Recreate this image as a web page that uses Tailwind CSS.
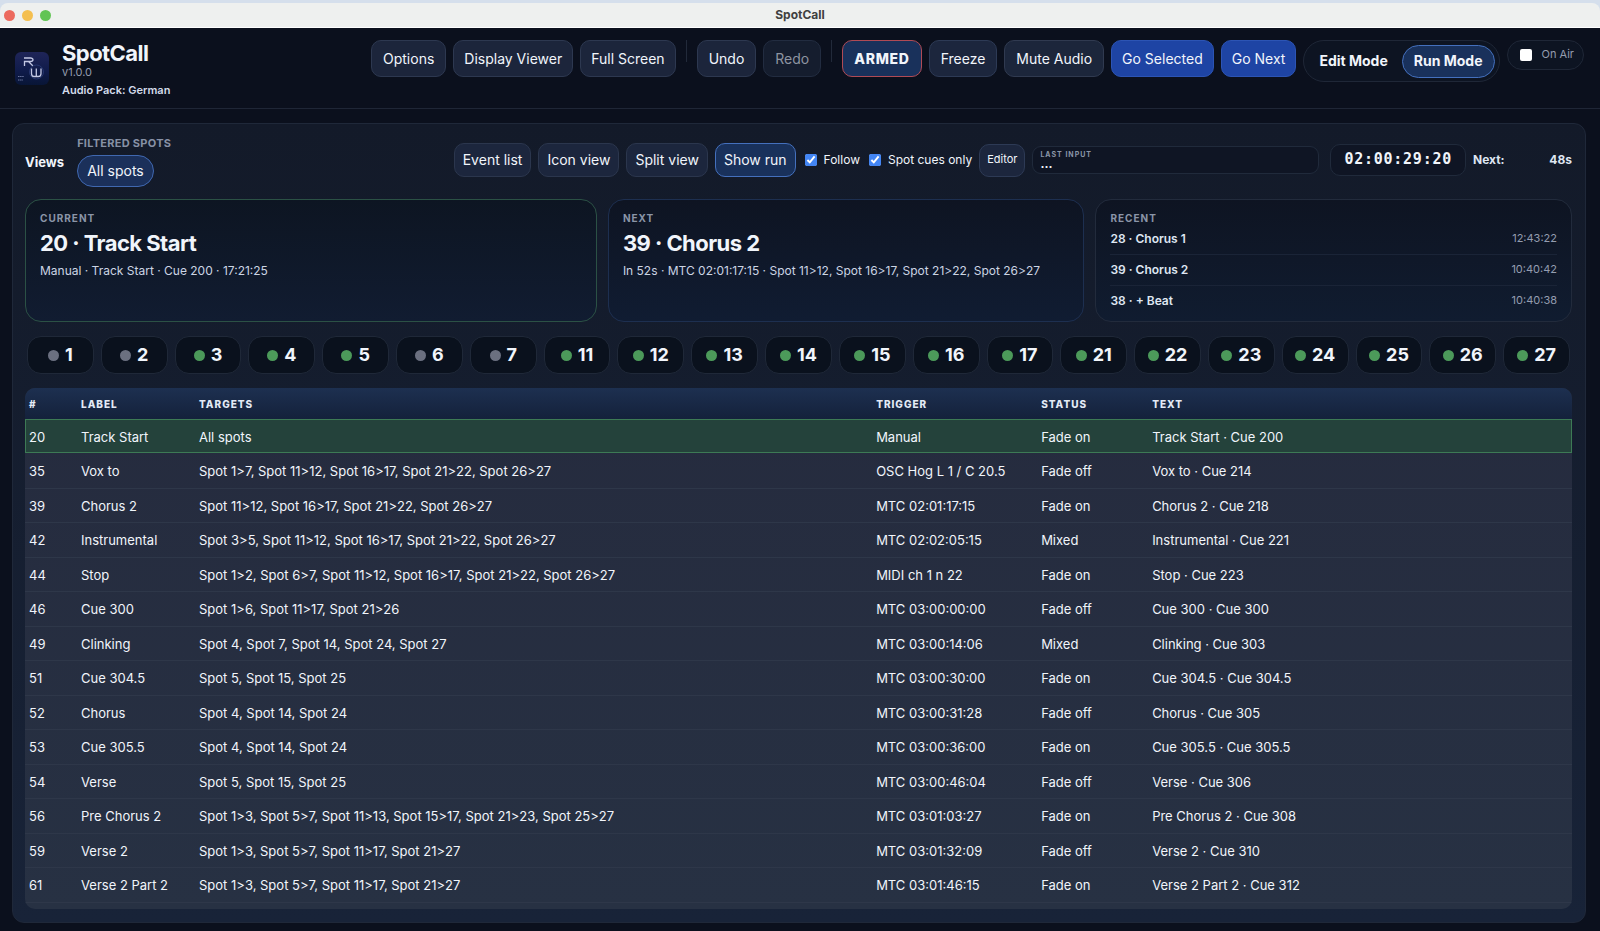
<!DOCTYPE html>
<html lang="en">
<head>
    <meta charset="UTF-8">
    <meta name="viewport" content="width=device-width, initial-scale=1.0">
    <title>SpotCall</title>
    <script src="https://cdn.jsdelivr.net/npm/@tailwindcss/browser@4"></script>
</head>
<body class="bg-[#d5dfec] font-['Inter',sans-serif] text-sm text-[#f1f5fb]">

<div class="flex flex-col min-h-screen pt-[3px]">
    <!-- Window title bar -->
    <div class="relative flex items-center h-[25px] px-1 gap-[7px] bg-[#eef0ef] rounded-t-lg border-b border-white">
        <span class="size-[11px] rounded-full bg-[#ec6a5e]"></span>
        <span class="size-[11px] rounded-full bg-[#f4bf4f]"></span>
        <span class="size-[11px] rounded-full bg-[#61c454]"></span>
        <div class="absolute inset-x-0 text-center text-[12px] font-bold text-[#3f4040]">SpotCall</div>
    </div>

    <div class="flex-1 flex flex-col bg-[#0b101d]">
        <header class="flex items-start justify-between h-[81px] pt-3 pl-[15px] pr-4 border-b border-[#1f2636]">
            <div class="flex items-center gap-[13px]">
                <svg class="size-[34px]" viewBox="0 0 34 34" fill="none">
                    <defs>
                        <linearGradient id="logoBg" x1="0" y1="0" x2="0" y2="1">
                            <stop offset="0" stop-color="#1f2558"/>
                            <stop offset="0.6" stop-color="#0f1b4a"/>
                            <stop offset="1" stop-color="#081536"/>
                        </linearGradient>
                    </defs>
                    <rect width="34" height="33" rx="6" fill="url(#logoBg)"/>
                    <path d="M9.500 14V9.500H15.500Q18 9.500 18 7.700Q18 6 15.500 6H9M13.500 9.500L18 14" stroke="#c3c8e4" stroke-width="1.300"/>
                    <circle cx="21.500" cy="20" r="7" stroke="#26366f" stroke-width="1"/>
                    <path d="M16.500 16.500V21.500Q16.500 24.500 19 24.500H23.500Q26 24.500 26 21.500V16.500M21.300 16.500V24" stroke="#c3c8e4" stroke-width="1.300"/>
                    <path d="M3 24.500H9M3 28H8" stroke="#6c769f" stroke-width="1.200" stroke-dasharray="1.500 0.600"/>
                </svg>
                <div>
                    <h1 class="text-[22px] leading-[26px] font-bold tracking-tight">SpotCall</h1>
                    <div class="text-[11px] leading-[12px] text-[#949cae]">v1.0.0</div>
                    <div class="mt-[5px] text-[11px] leading-[14px] font-semibold text-[#d3dbea]">Audio Pack: German</div>
                </div>
            </div>

            <div class="flex items-start gap-[7px] whitespace-nowrap">
                <button class="h-[37px] px-[11px] rounded-[10px] border border-[#2d3850] bg-[#1c253b]">Options</button>
                <button class="h-[37px] px-[10px] rounded-[10px] border border-[#2d3850] bg-[#1c253b]">Display Viewer</button>
                <button class="h-[37px] px-[10px] rounded-[10px] border border-[#2d3850] bg-[#1c253b]">Full Screen</button>
                <span class="w-px h-[22px] mx-[3px] bg-[#222a3a]"></span>
                <button class="h-[37px] px-[11px] rounded-[10px] border border-[#2d3850] bg-[#1c253b]">Undo</button>
                <button class="h-[37px] px-[11px] rounded-[10px] border border-[#222c40] bg-[#151d2e] text-[#8e94a1]" disabled>Redo</button>
                <span class="w-px h-[22px] mx-[3px] bg-[#222a3a]"></span>
                <button class="h-[37px] px-[11px] rounded-[10px] border border-[#b04a55] bg-[#19315b] font-extrabold tracking-wider">ARMED</button>
                <button class="h-[37px] px-[11px] rounded-[10px] border border-[#2d3a55] bg-[#1c263d]">Freeze</button>
                <button class="h-[37px] px-[11px] rounded-[10px] border border-[#303a50] bg-[#1c263b]">Mute Audio</button>
                <button class="h-[37px] px-[10px] rounded-[10px] border border-[#2c54b4] bg-[#1e44a4]">Go Selected</button>
                <button class="h-[37px] px-[10px] rounded-[10px] border border-[#2c54b4] bg-[#1e44a4]">Go Next</button>
                <div class="flex items-center gap-[3px] h-[42px] p-1 rounded-full border border-[#1f2737] bg-[#0d1422] font-bold">
                    <button class="h-[33px] px-[11px] rounded-full">Edit Mode</button>
                    <button class="h-[33px] px-[11px] rounded-full border border-[#4470bd] bg-[#19315b]">Run Mode</button>
                </div>
                <label class="flex items-center gap-[10px] h-[30px] pl-[12px] pr-[9px] rounded-full border border-[#1f2737] bg-[#0d1422] text-[11px] text-[#949cae]">
                    <input type="checkbox" class="appearance-none size-[12px] rounded-[2px] bg-white">
                    On Air
                </label>
            </div>
        </header>

        <main class="flex-1 flex flex-col mt-[14px] ml-3 mr-[14px] mb-2 pl-3 pr-[13px] pt-3 pb-[13px] rounded-xl border border-[#1f2839] bg-linear-to-b from-[#131a29] to-[#182338]">
            <div class="flex items-center justify-between h-[50px] whitespace-nowrap">
                <div class="flex items-center gap-[13px]">
                    <span class="mt-[2px] font-bold text-[13px]">Views</span>
                    <div>
                        <div class="text-[11px] leading-[14px] font-bold tracking-wide text-[#8791a5]">FILTERED SPOTS</div>
                        <button class="h-[32px] mt-[5px] px-[9px] rounded-full border border-[#4068b0] bg-[#1b305a]">All spots</button>
                    </div>
                </div>
                <div class="flex items-center gap-[7px] mt-[-2px] text-[12px]">
                    <button class="h-[34px] px-[8px] rounded-[10px] border border-[#2b364d] bg-[#1c263d] text-sm">Event list</button>
                    <button class="h-[34px] px-[8px] rounded-[10px] border border-[#2b364d] bg-[#1c263d] text-sm">Icon view</button>
                    <button class="h-[34px] px-[8px] rounded-[10px] border border-[#2b364d] bg-[#1c263d] text-sm">Split view</button>
                    <button class="h-[34px] px-[8px] rounded-[10px] border border-[#4470bd] bg-[#19315b] text-sm">Show run</button>
                    <label class="flex items-center gap-[7px] pl-[2px]">
                        <input type="checkbox" class="size-[12px] accent-[#4285f4]" checked>
                        Follow
                    </label>
                    <label class="flex items-center gap-[7px] pl-[2px]">
                        <input type="checkbox" class="size-[12px] accent-[#4285f4]" checked>
                        Spot cues only
                    </label>
                    <button class="h-[33px] px-[7px] rounded-[10px] border border-[#2d3a55] bg-[#1c263d] text-[11px]">Editor</button>
                    <div class="w-[287px] h-[28px] px-[7px] rounded-[9px] border border-[#202a3b] bg-[#0f1524]">
                        <div class="pt-[3px] text-[7px] leading-[9px] font-bold tracking-[1px] text-[#8b95a8]">LAST INPUT</div>
                        <div class="text-[12px] leading-[9px] font-bold">...</div>
                    </div>
                    <div class="flex items-center h-[32px] ml-1 px-[13px] rounded-[10px] border border-[#202a3b] bg-[#0f1524] font-['DejaVu_Sans_Mono',monospace] text-[15px] font-bold tracking-wider">02:00:29:20</div>
                    <div class="flex justify-between w-[99px] font-bold text-[#dfe6f2]"><span>Next:</span><span>48s</span></div>
                </div>
            </div>

            <section class="grid grid-cols-[1.2fr_1fr_1fr] gap-[11px] mt-[13px] h-[123px]">
                <div class="px-[14px] pt-[12px] rounded-2xl border border-[#2b5145] bg-linear-to-b from-[#0d1522] to-[#111c31]">
                    <h2 class="text-[10px] leading-[12px] font-bold tracking-widest text-[#8b95a8]">CURRENT</h2>
                    <div class="mt-[5px] text-[22px] leading-[28px] font-bold tracking-tight">20 · Track Start</div>
                    <div class="mt-[6px] text-[12px] leading-[16px] text-[#ccd5e4]">Manual · Track Start · Cue 200 · 17:21:25</div>
                </div>
                <div class="px-[14px] pt-[12px] rounded-2xl border border-[#1d2f50] bg-linear-to-b from-[#0e1422] to-[#101c32]">
                    <h2 class="text-[10px] leading-[12px] font-bold tracking-widest text-[#8b95a8]">NEXT</h2>
                    <div class="mt-[5px] text-[22px] leading-[28px] font-bold tracking-tight">39 · Chorus 2</div>
                    <div class="mt-[6px] text-[12px] leading-[16px] text-[#ccd5e4]">In 52s · MTC 02:01:17:15 · Spot 11&gt;12, Spot 16&gt;17, Spot 21&gt;22, Spot 26&gt;27</div>
                </div>
                <div class="px-[14px] pt-[12px] rounded-2xl border border-[#222b3c] bg-linear-to-b from-[#0e1422] to-[#101c30]">
                    <h2 class="text-[10px] leading-[12px] font-bold tracking-widest text-[#8b95a8]">RECENT</h2>
                    <ul class="text-[12px] divide-y divide-[#1a2437]">
                        <li class="flex justify-between h-[31px] pt-[6px]"><span class="font-semibold leading-[18px] text-[#dfe6f2]">28 · Chorus 1</span><span class="text-[11px] leading-[16px] text-[#949db0]">12:43:22</span></li>
                        <li class="flex justify-between h-[31px] pt-[6px]"><span class="font-semibold leading-[18px] text-[#dfe6f2]">39 · Chorus 2</span><span class="text-[11px] leading-[16px] text-[#949db0]">10:40:42</span></li>
                        <li class="flex justify-between h-[31px] pt-[6px]"><span class="font-semibold leading-[18px] text-[#dfe6f2]">38 · + Beat</span><span class="text-[11px] leading-[16px] text-[#949db0]">10:40:38</span></li>
                    </ul>
                </div>
            </section>

            <div id="spots" class="grid grid-cols-[repeat(21,minmax(0,1fr))] gap-[7px] mt-[14px] px-[2px]"></div>

            <div class="flex-1 mt-[14px] rounded-[10px] overflow-hidden bg-linear-to-b from-[#252b3e] to-[#273143]">
                <table class="w-full table-fixed text-left">
                    <thead>
                        <tr class="h-[31px] bg-linear-to-b from-[#1d3050] to-[#14213b] text-[10px] tracking-widest text-[#e3eaf6]">
                            <th class="w-[52px] pl-1 pt-[2px] font-extrabold">#</th>
                            <th class="w-[118px] pl-1 pt-[2px] font-extrabold">LABEL</th>
                            <th class="pl-1 pt-[2px] font-extrabold">TARGETS</th>
                            <th class="w-[165px] pl-1 pt-[2px] font-extrabold">TRIGGER</th>
                            <th class="w-[111px] pl-1 pt-[2px] font-extrabold">STATUS</th>
                            <th class="w-[27.4%] pl-1 pt-[2px] font-extrabold">TEXT</th>
                        </tr>
                    </thead>
                    <tbody id="cues" class="text-[13px]"></tbody>
                </table>
            </div>
        </main>
    </div>
</div>

<script>
    const spots = [1, 2, 3, 4, 5, 6, 7, 11, 12, 13, 14, 15, 16, 17, 21, 22, 23, 24, 25, 26, 27];
    const offSpots = [1, 2, 6, 7];

    document.getElementById('spots').innerHTML = spots.map(n => `
        <button class="flex items-center justify-center gap-[6px] h-[38px] rounded-[14px] border border-[#1f2838] bg-[#0a111d] text-lg font-bold">
            <span class="size-[11px] rounded-full ${offSpots.includes(n) ? 'bg-[#6b7080]' : 'bg-[#4c9a5a]'}"></span>${n}
        </button>`).join('');

    const cues = [
        ['20', 'Track Start', 'All spots', 'Manual', 'Fade on', 'Track Start · Cue 200'],
        ['35', 'Vox to', 'Spot 1>7, Spot 11>12, Spot 16>17, Spot 21>22, Spot 26>27', 'OSC Hog L 1 / C 20.5', 'Fade off', 'Vox to · Cue 214'],
        ['39', 'Chorus 2', 'Spot 11>12, Spot 16>17, Spot 21>22, Spot 26>27', 'MTC 02:01:17:15', 'Fade on', 'Chorus 2 · Cue 218'],
        ['42', 'Instrumental', 'Spot 3>5, Spot 11>12, Spot 16>17, Spot 21>22, Spot 26>27', 'MTC 02:02:05:15', 'Mixed', 'Instrumental · Cue 221'],
        ['44', 'Stop', 'Spot 1>2, Spot 6>7, Spot 11>12, Spot 16>17, Spot 21>22, Spot 26>27', 'MIDI ch 1 n 22', 'Fade on', 'Stop · Cue 223'],
        ['46', 'Cue 300', 'Spot 1>6, Spot 11>17, Spot 21>26', 'MTC 03:00:00:00', 'Fade off', 'Cue 300 · Cue 300'],
        ['49', 'Clinking', 'Spot 4, Spot 7, Spot 14, Spot 24, Spot 27', 'MTC 03:00:14:06', 'Mixed', 'Clinking · Cue 303'],
        ['51', 'Cue 304.5', 'Spot 5, Spot 15, Spot 25', 'MTC 03:00:30:00', 'Fade on', 'Cue 304.5 · Cue 304.5'],
        ['52', 'Chorus', 'Spot 4, Spot 14, Spot 24', 'MTC 03:00:31:28', 'Fade off', 'Chorus · Cue 305'],
        ['53', 'Cue 305.5', 'Spot 4, Spot 14, Spot 24', 'MTC 03:00:36:00', 'Fade on', 'Cue 305.5 · Cue 305.5'],
        ['54', 'Verse', 'Spot 5, Spot 15, Spot 25', 'MTC 03:00:46:04', 'Fade off', 'Verse · Cue 306'],
        ['56', 'Pre Chorus 2', 'Spot 1>3, Spot 5>7, Spot 11>13, Spot 15>17, Spot 21>23, Spot 25>27', 'MTC 03:01:03:27', 'Fade on', 'Pre Chorus 2 · Cue 308'],
        ['59', 'Verse 2', 'Spot 1>3, Spot 5>7, Spot 11>17, Spot 21>27', 'MTC 03:01:32:09', 'Fade off', 'Verse 2 · Cue 310'],
        ['61', 'Verse 2 Part 2', 'Spot 1>3, Spot 5>7, Spot 11>17, Spot 21>27', 'MTC 03:01:46:15', 'Fade on', 'Verse 2 Part 2 · Cue 312'],
    ];

    document.getElementById('cues').innerHTML = cues.map((cue, i) => `
        <tr class="h-[34px] even:h-[35px] ${i === 0 ? 'bg-[#24423b] outline outline-[#3d7a55] -outline-offset-1' : 'border-b border-[#2e3749]'}">
            ${cue.map(text => `<td class="pl-1 pt-[2px] whitespace-nowrap">${text.replaceAll('>', '&gt;')}</td>`).join('')}
        </tr>`).join('');
</script>

</body>
</html>
